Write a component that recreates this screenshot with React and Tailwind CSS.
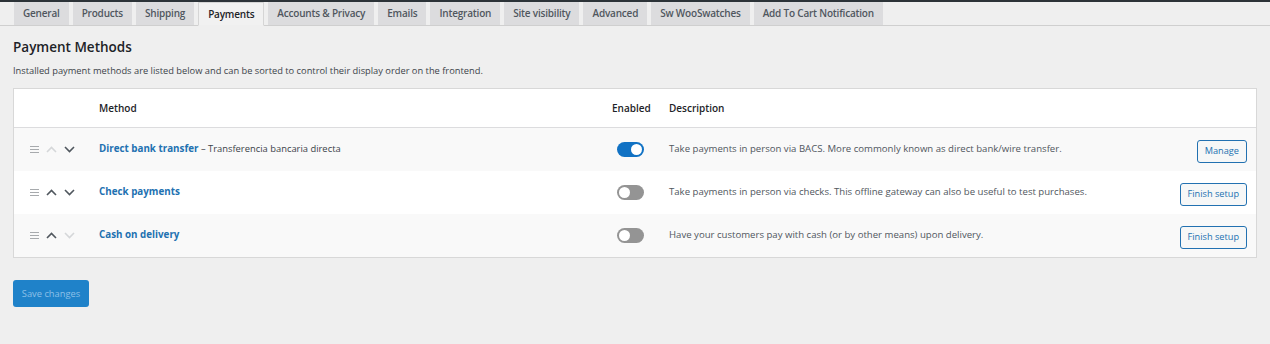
import React from 'react';

const tabs = [
  'General',
  'Products',
  'Shipping',
  'Payments',
  'Accounts & Privacy',
  'Emails',
  'Integration',
  'Site visibility',
  'Advanced',
  'Sw WooSwatches',
  'Add To Cart Notification',
];

const methods = [
  {
    name: 'Direct bank transfer',
    extra: 'Transferencia bancaria directa',
    enabled: true,
    desc: 'Take payments in person via BACS. More commonly known as direct bank/wire transfer.',
    action: 'Manage',
    canUp: false,
    canDown: true,
  },
  {
    name: 'Check payments',
    enabled: false,
    desc: 'Take payments in person via checks. This offline gateway can also be useful to test purchases.',
    action: 'Finish setup',
    canUp: true,
    canDown: true,
  },
  {
    name: 'Cash on delivery',
    enabled: false,
    desc: 'Have your customers pay with cash (or by other means) upon delivery.',
    action: 'Finish setup',
    canUp: true,
    canDown: false,
  },
];

const Chevron = ({ up, active }) => (
  <svg width="11" height="7" viewBox="0 0 11 7" className={active ? 'text-[#50575e]' : 'text-[#d5d7d9]'}>
    <path
      d={up ? 'M1 6 L5.5 1.5 L10 6' : 'M1 1 L5.5 5.5 L10 1'}
      fill="none"
      stroke="currentColor"
      strokeWidth="1.6"
    />
  </svg>
);

const Toggle = ({ on }) => (
  <div
    className={`w-[27px] h-[15px] rounded-full flex items-center px-[2px] ${
      on ? 'bg-[#1172c4] justify-end' : 'bg-[#949494] justify-start'
    }`}
  >
    <div className="w-[11px] h-[11px] rounded-full bg-white" />
  </div>
);

const App = () => {
  return (
    <div className="w-[1270px] h-[344px] bg-[#efefef] text-[#1d2327]" style={{ fontFamily: '"Open Sans", "Noto Sans", sans-serif' }}>
      <div className="h-[2px] bg-[#2c3338]" />

      {/* settings tabs */}
      <div className="flex items-end pl-[14px] border-b border-[#cfcfcf] h-[24px]">
        {tabs.map((tab) => (
          <div
            key={tab}
            className={`px-[9px] mr-[4px] flex items-center text-[10px] font-semibold tracking-[-0.2px] ${
              tab === 'Payments'
                ? 'bg-[#f1f1f1] text-[#1d2327] border border-[#d5d5d5] border-b-[#efefef] -mb-px h-[24px]'
                : 'bg-[#dcdcde] text-[#50575e] h-[23px]'
            }`}
          >
            {tab}
          </div>
        ))}
      </div>

      <div className="px-[13px]">
        <h2 className="mt-[12px] text-[13.5px] font-semibold text-[#1d2327] leading-[18px]">Payment Methods</h2>
        <p className="mt-[8px] text-[9.3px] text-[#3c434a] leading-[14px]">
          Installed payment methods are listed below and can be sorted to control their display order on the frontend.
        </p>

        {/* methods table */}
        <div className="mt-[10px] border border-[#d8d8d8] bg-white">
          <div className="flex items-center h-[39px] border-b border-[#dcdcde] text-[10px] font-semibold text-[#1d2327]">
            <div className="w-[85px]" />
            <div className="w-[513px]">Method</div>
            <div className="w-[57px]">Enabled</div>
            <div className="flex-1">Description</div>
          </div>

          {methods.map((m, i) => (
            <div
              key={m.name}
              className={`flex items-center h-[43px] ${i % 2 === 0 ? 'bg-[#f9f9f9]' : 'bg-white'}`}
            >
              <div className="w-[85px] pl-[16px] flex items-center gap-[7px]">
                <svg width="9" height="7" viewBox="0 0 9 7" className="text-[#a7aaad]">
                  <path d="M0 0.5 H9 M0 3.5 H9 M0 6.5 H9" stroke="currentColor" strokeWidth="1" />
                </svg>
                <Chevron up active={m.canUp} />
                <Chevron active={m.canDown} />
              </div>
              <div className="w-[513px] text-[9.8px]">
                <span className="font-bold text-[#2271b1]">{m.name}</span>
                {m.extra && <span className="text-[9.4px] text-[#3c434a]"> – {m.extra}</span>}
              </div>
              <div className="w-[57px] pl-[5px]">
                <Toggle on={m.enabled} />
              </div>
              <div className="flex-1 text-[9.6px] text-[#50575e]">{m.desc}</div>
              <div className="pr-[9px]">
                <button className="h-[23px] px-[7px] border border-[#2271b1] rounded-[3px] bg-[#f6f7f7] text-[9.2px] text-[#2271b1]">
                  {m.action}
                </button>
              </div>
            </div>
          ))}
        </div>

        <button className="mt-[22px] h-[27px] w-[76px] rounded-[3px] bg-[#1f82c9] text-[9.3px] text-[#8dc0e8]">
          Save changes
        </button>
      </div>
    </div>
  );
};

export default App;
